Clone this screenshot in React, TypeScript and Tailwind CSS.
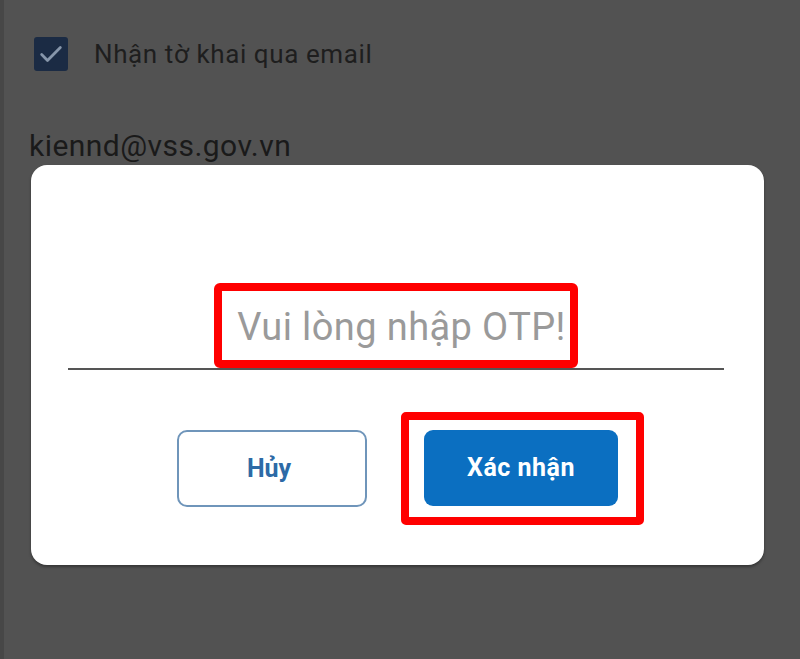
import React from "react";

export default function App() {
  return (
    <div
      className="relative h-[659px] w-[800px] overflow-hidden bg-[#525252] border-l-[4px] border-[#474747]"
      style={{ fontFamily: "Roboto, 'Noto Sans', sans-serif" }}
    >
      {/* Underlying page (dimmed) */}
      <div className="flex flex-col pt-[37px] pl-[30px]">
        <div className="flex items-center gap-[26px]">
          <div className="flex h-[34px] w-[34px] items-center justify-center rounded-[3px] bg-[#1b2b44]">
            <svg width="28" height="28" viewBox="0 0 24 24" fill="none">
              <path d="M4 12.5l5 5L20 6.5" stroke="#8796aa" strokeWidth="2.4" strokeLinecap="round" strokeLinejoin="round" />
            </svg>
          </div>
          <span className="text-[26px] leading-[30px] tracking-[0.6px] text-[#1e1e1e]">Nhận tờ khai qua email</span>
        </div>
        <div className="mt-[58px] -ml-[5px] text-[30px] leading-[34px] tracking-[0.45px] text-[#1a1a1a]">kiennd@vss.gov.vn</div>
      </div>

      {/* Modal dialog */}
      <div className="absolute left-[27px] top-[165px] flex h-[400px] w-[733px] flex-col rounded-[16px] bg-white shadow-[0_2px_3px_rgba(0,0,0,0.35)]">
        <div className="ml-[37px] mr-[40px] mt-[118px] flex justify-center border-b-2 border-[#555555]">
          <div className="rounded-[6px] border-[8px] border-[#ff0000] pb-[11px] pl-[15px] pr-[4px] pt-[14px]">
            <span className="block text-[38px] leading-[44px] tracking-[0.4px] text-[#9a9a9a]">Vui lòng nhập OTP!</span>
          </div>
        </div>
        <div className="mt-[60px] flex justify-center gap-[57px]">
          <button className="flex h-[77px] w-[190px] items-center justify-center rounded-[10px] border-2 border-[#6f95ba] bg-white pr-[6px] text-[25px] font-bold text-[#2d6aa6]">
            Hủy
          </button>
          <div className="relative">
            <button className="flex h-[76px] w-[194px] items-center justify-center rounded-[9px] bg-[#0b6fc1] text-[25px] font-bold tracking-[0.5px] text-white">
              Xác nhận
            </button>
            <span className="pointer-events-none absolute -bottom-[18px] -left-[23px] -right-[26px] -top-[18px] rounded-[5px] border-[8px] border-[#ff0000]" />
          </div>
        </div>
      </div>
    </div>
  );
}
